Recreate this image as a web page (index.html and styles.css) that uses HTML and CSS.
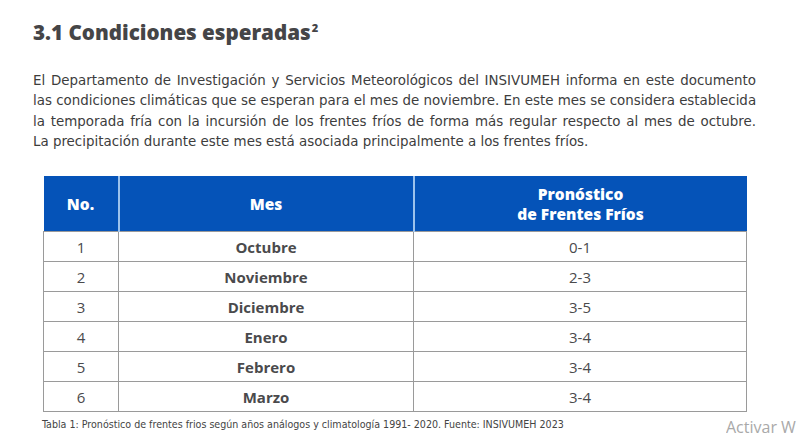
FILE: index.html
```html
<!DOCTYPE html>
<html lang="es">
<head>
<meta charset="utf-8">
<link rel="stylesheet" href="styles.css">
</head>
<body>
<div class="page">
  <h1 class="title">3.1 Condiciones esperadas<sup>2</sup></h1>
  <p class="intro"><span class="ln">El Departamento de Investigación y Servicios Meteorológicos del INSIVUMEH informa en este documento</span> <span class="ln">las condiciones climáticas que se esperan para el mes de noviembre. En este mes se considera establecida</span> <span class="ln">la temporada fría con la incursión de los frentes fríos de forma más regular respecto al mes de octubre.</span> <span class="ln last">La precipitación durante este mes está asociada principalmente a los frentes fríos.</span></p>
  <table class="tbl">
    <thead>
      <tr><th class="c-no">No.</th><th class="c-mes">Mes</th><th class="c-pr">Pronóstico<br>de Frentes Fríos</th></tr>
    </thead>
    <tbody>
      <tr><td>1</td><td class="m">Octubre</td><td>0-1</td></tr>
      <tr><td>2</td><td class="m">Noviembre</td><td>2-3</td></tr>
      <tr><td>3</td><td class="m">Diciembre</td><td>3-5</td></tr>
      <tr><td>4</td><td class="m">Enero</td><td>3-4</td></tr>
      <tr><td>5</td><td class="m">Febrero</td><td>3-4</td></tr>
      <tr><td>6</td><td class="m">Marzo</td><td>3-4</td></tr>
    </tbody>
  </table>
  <div class="foot">
    <span class="caption">Tabla 1: Pronóstico de frentes frios según años análogos y climatología 1991- 2020. Fuente: INSIVUMEH 2023</span>
    <span class="watermark">Activar W</span>
  </div>
</div>
</body>
</html>
```
FILE: styles.css
```css
html, body { margin: 0; padding: 0; background: #fff; overflow: hidden; }
.page { width: 800px; height: 438px; padding: 18px 0 0 33px; box-sizing: border-box; }
.title {
  margin: 0;
  font-family: "Open Sans", sans-serif;
  font-weight: 800;
  font-size: 20.6px;
  line-height: 28px;
  color: #454547;
}
.title sup { font-size: 11px; vertical-align: 8px; line-height: 0; margin-left: 1px; }
.intro {
  margin: 24px 0 0 0;
  width: 723px;
  font-family: "DejaVu Sans Condensed", "DejaVu Sans", sans-serif;
  font-size: 14.9px;
  line-height: 20.3px;
  color: #3d3d3d;
}
.ln { display: block; white-space: nowrap; text-align: justify; text-align-last: justify; }
.ln.last { text-align-last: left; }
.tbl {
  margin: 25px 0 0 10px;
  border-collapse: collapse;
  width: 704px;
  font-family: "Open Sans", sans-serif;
  color: #4a4a4c;
}
.tbl th {
  background: #0553b8;
  color: #fff;
  font-weight: 800;
  font-size: 15.5px;
  line-height: 20px;
  height: 55px;
  padding: 0;
  border-left: 2px solid #9cc2ec;
}
.tbl th:first-child { border-left: none; }
.c-no { width: 74px; }
.c-mes { width: 293px; }
.tbl td {
  height: 29px;
  padding: 0;
  text-align: center;
  font-size: 15px;
  font-weight: 500;
  border: 1.5px solid #9a9a9a;
}
.tbl td.m { font-weight: 700; }
.foot { display: flex; align-items: flex-end; justify-content: space-between; padding: 0 0 0 9px; margin-top: 4px; }
.caption { font-family: "DejaVu Sans Condensed", "DejaVu Sans", sans-serif; font-size: 10.6px; color: #444; }
.watermark { font-family: "Open Sans", sans-serif; font-size: 16px; color: #a9a9a9; margin-bottom: -8px; white-space: nowrap; width: 74px; overflow: hidden; }
```
